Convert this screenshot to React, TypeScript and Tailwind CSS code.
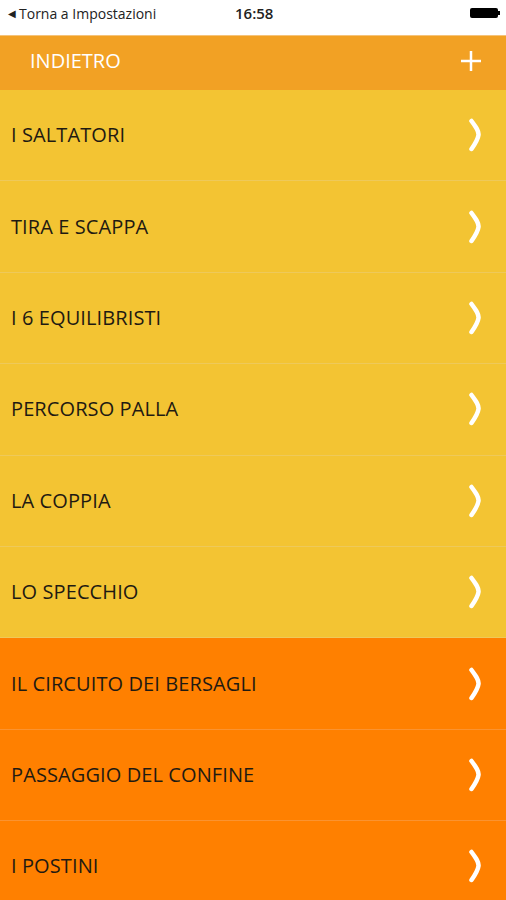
import React from "react";

const items = [
  { label: "I SALTATORI", color: "yellow" },
  { label: "TIRA E SCAPPA", color: "yellow" },
  { label: "I 6 EQUILIBRISTI", color: "yellow" },
  { label: "PERCORSO PALLA", color: "yellow" },
  { label: "LA COPPIA", color: "yellow" },
  { label: "LO SPECCHIO", color: "yellow" },
  { label: "IL CIRCUITO DEI BERSAGLI", color: "orange" },
  { label: "PASSAGGIO DEL CONFINE", color: "orange" },
  { label: "I POSTINI", color: "orange" },
];

const Chevron = () => (
  <svg width="14" height="34" viewBox="0 0 14 34" fill="none">
    <path d="M3.5 3 C8 9 11 13 10.5 17 C10 21 7 26 3.5 31" stroke="white" strokeWidth="4.5" strokeLinecap="round" />
  </svg>
);

const App: React.FC = () => {
  return (
    <div className="w-[506px] h-[900px] overflow-hidden bg-white" style={{ fontFamily: '"Open Sans", "Noto Sans", sans-serif' }}>
      {/* status bar */}
      <div className="relative flex items-center h-[35px] pl-2 pr-[6px] pb-[9px] bg-white text-[#222]">
        <div className="flex items-center gap-[3px] text-[14px]">
          <span className="text-[10px]">◀</span>
          <span>Torna a Impostazioni</span>
        </div>
        <div className="absolute left-[235px] top-0 h-[26px] flex items-center text-[15px] font-semibold">16:58</div>
        <div className="ml-auto flex items-center">
          <div className="w-[28px] h-[10px] bg-black rounded-[2px]" />
          <div className="w-[2px] h-[4px] bg-black" />
        </div>
      </div>

      {/* header */}
      <div className="flex items-center justify-between h-[55px] bg-[#f2a124] border-t border-[#f5c37a] pl-[30px] pr-[24px] pb-[4px]">
        <span className="text-white text-[20px]">INDIETRO</span>
        <svg width="22" height="22" viewBox="0 0 22 22">
          <path d="M11 1 V21 M1 11 H21" stroke="white" strokeWidth="2.5" />
        </svg>
      </div>

      {/* list */}
      <div className="flex flex-col">
        {items.map((item, i) => (
          <div
            key={i}
            className={
              item.color === "yellow"
                ? "flex items-center justify-between h-[91.4px] bg-[#f3c433] border-b border-[#eec95a] pl-[11px] pr-[24px]"
                : "flex items-center justify-between h-[91.4px] bg-[#ff8000] border-b border-[#fb9330] pl-[11px] pr-[24px]"
            }
          >
            <span className="text-[#1f1a12] text-[20px] tracking-[0.1px]">{item.label}</span>
            <Chevron />
          </div>
        ))}
      </div>
    </div>
  );
};

export default App;
